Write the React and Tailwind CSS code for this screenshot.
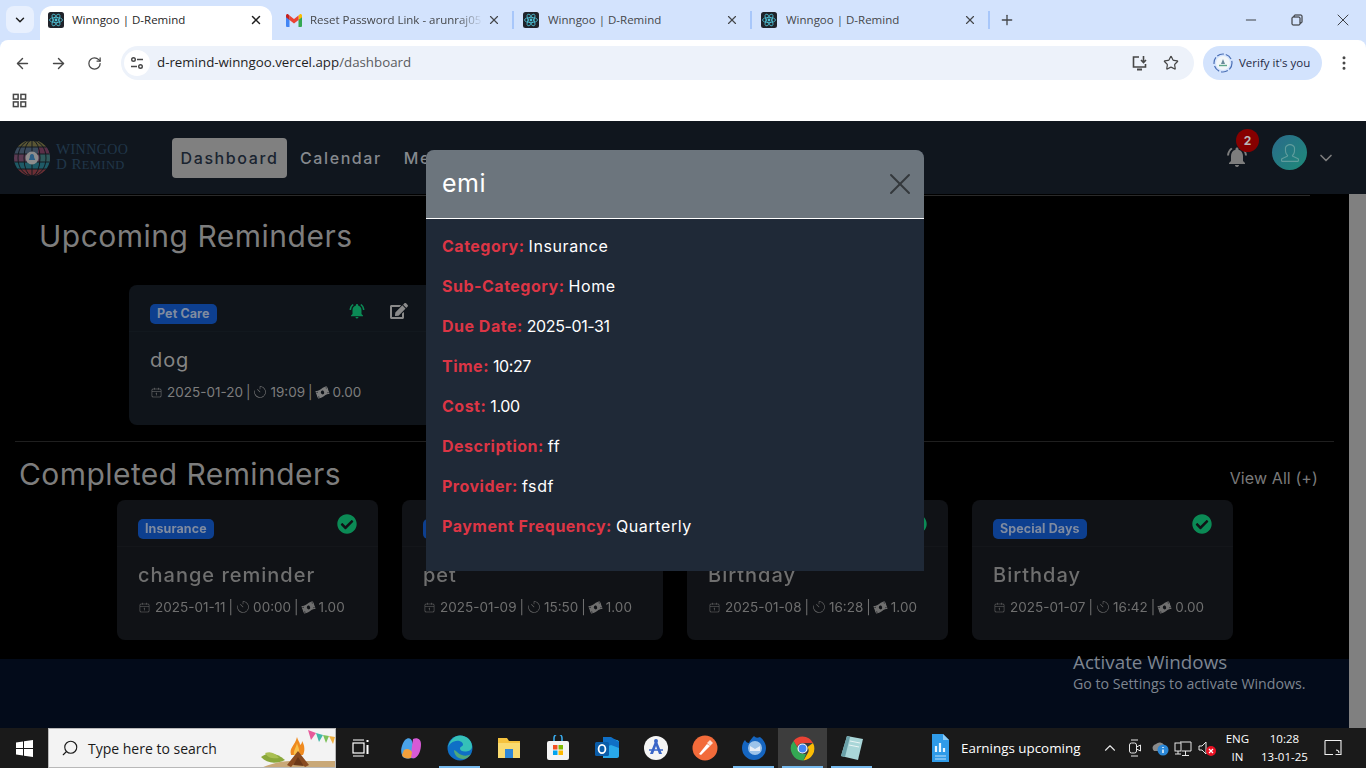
import { ArrowLeft, ArrowRight, RotateCw, Star, X, Plus, Minus, EllipsisVertical, ChevronDown, ChevronUp, Search } from "lucide-react";
import { MdNotificationsActive } from "react-icons/md";
import { FaCheckCircle, FaEdit, FaMoneyBillWave } from "react-icons/fa";
import { CiCalendarDate, CiTimer } from "react-icons/ci";
import { SlUser } from "react-icons/sl";

const ReactFav = () => (
  <svg width="16" height="16" viewBox="0 0 16 16" className="shrink-0">
    <rect width="16" height="16" rx="2.5" fill="#20232a" />
    <g fill="none" stroke="#4fc3d8" strokeWidth="0.8">
      <ellipse cx="8" cy="8" rx="6.5" ry="2.6" />
      <ellipse cx="8" cy="8" rx="6.5" ry="2.6" transform="rotate(60 8 8)" />
      <ellipse cx="8" cy="8" rx="6.5" ry="2.6" transform="rotate(120 8 8)" />
    </g>
    <circle cx="8" cy="8" r="1.4" fill="#4fc3d8" />
  </svg>
);

const GmailFav = () => (
  <svg width="16" height="13" viewBox="0 0 16 13" className="shrink-0">
    <path d="M0 2v10a1 1 0 0 0 1 1h2.5V5.5z" fill="#4285f4" />
    <path d="M16 2v10a1 1 0 0 1-1 1h-2.5V5.5z" fill="#34a853" />
    <path d="M12.5 1.5V6L16 3.2V1.6C16 .4 14.6-.4 13.6.4z" fill="#fbbc04" />
    <path d="M3.5 6V1.5L8 5l4.5-3.5V6L8 9.4z" fill="#ea4335" />
    <path d="M0 1.6v1.6L3.5 6V1.5L2.4.4C1.4-.4 0 .4 0 1.6z" fill="#c5221f" />
  </svg>
);

const Tab = ({ title, gmail }) => (
  <div className={gmail ? "flex items-center w-[242px] h-[34px] pb-[6px] pl-[14px]" : "flex items-center w-[238px] h-[34px] pb-[6px] pl-[9px]"}>
    {gmail ? <GmailFav /> : <ReactFav />}
    <span className={gmail ? "ml-2 flex-1 overflow-hidden whitespace-nowrap text-[11.500px] text-[#45474a] mask-r-from-85% mask-r-to-100%" : "ml-[9px] flex-1 overflow-hidden whitespace-nowrap text-[11.500px] text-[#45474a]"}>{title}</span>
    <X size={14} strokeWidth={2} className="ml-1 text-[#45474a] shrink-0" />
    <div className="w-[2px] h-[18px] ml-[11px] bg-[#a8c7fa]" />
  </div>
);

const BrowserBar = () => (
  <div className="bg-[#d3e3fd] h-[121px] font-['Open_Sans',sans-serif]">
    <div className="flex items-end h-10 pl-[6px]">
      <div className="flex items-center justify-center self-start w-7 h-[27px] mt-[6px] rounded-lg bg-[#e8f0fe]">
        <ChevronDown size={14} strokeWidth={2.5} className="text-[#1f1f1f]" />
      </div>
      <div className="flex items-center w-[232px] h-[34px] ml-[6px] pb-[6px] pl-2 pr-[9px] bg-white rounded-t-xl">
        <ReactFav />
        <span className="ml-2 flex-1 text-[11.500px] text-[#1f1f1f]">Winngoo | D-Remind</span>
        <X size={14} strokeWidth={2.5} className="text-[#1f1f1f]" />
      </div>
      <Tab gmail title="Reset Password Link - arunraj05" />
      <Tab title="Winngoo | D-Remind" />
      <Tab title="Winngoo | D-Remind" />
      <div className="flex items-center h-[34px] pb-[6px] ml-[9px]">
        <Plus size={16} strokeWidth={2} className="text-[#45474a]" />
      </div>
      <div className="flex items-center self-start h-10 ml-auto text-[#1f1f1f]">
        <Minus size={16} strokeWidth={1.25} />
        <svg width="12" height="12" viewBox="0 0 12 12" className="ml-[32px]" fill="none" stroke="#1f1f1f">
          <rect x="1" y="3" width="8" height="8" rx="1" />
          <path d="M3 3V2a1 1 0 0 1 1-1h6a1 1 0 0 1 1 1v6a1 1 0 0 1-1 1H9" />
        </svg>
        <X size={20} strokeWidth={1} className="ml-[30px] mr-[13px]" />
      </div>
    </div>
    <div className="h-[81px] bg-white rounded-t-lg">
      <div className="flex items-center h-[45px] pt-px pl-[14px]">
        <ArrowLeft size={17} strokeWidth={2} className="text-[#474747]" />
        <ArrowRight size={17} strokeWidth={2} className="ml-[19px] text-[#474747]" />
        <RotateCw size={15} strokeWidth={2} className="ml-[20px] text-[#474747]" />
        <div className="flex items-center w-[1073px] h-[34px] ml-[19px] pl-[3px] pr-[15px] bg-[#edf2fa] rounded-full">
          <div className="flex items-center justify-center w-[26px] h-[26px] bg-white rounded-full">
            <svg width="14" height="14" viewBox="0 0 14 14" fill="none" stroke="#474747" strokeWidth="1.4">
              <circle cx="3.5" cy="3.5" r="1.8" />
              <path d="M7 3.5h6M1 10.5h6" />
              <circle cx="10.5" cy="10.5" r="1.8" />
            </svg>
          </div>
          <span className="ml-[7px] flex-1 text-[13.300px] text-[#1f1f1f]">
            d-remind-winngoo.vercel.app<span className="text-[#5a5c60]">/dashboard</span>
          </span>
          <svg width="18" height="18" viewBox="0 0 18 18" fill="none" stroke="#474747" strokeWidth="1.6">
            <path d="M8 3H2.5v10h12V10" />
            <path d="M6 15.5h5" strokeWidth="2" />
            <path d="M12.5 2v6M10 6l2.500 2.500L15 6" />
          </svg>
          <Star size={16} strokeWidth={1.8} className="ml-[14px] text-[#474747]" />
        </div>
        <div className="flex items-center w-[119px] h-[34px] ml-[9px] pl-[10px] bg-[#d3e3fd] rounded-full">
          <svg width="20" height="20" viewBox="0 0 20 20" fill="none">
            <circle cx="10" cy="10" r="9" stroke="#4a6fb5" strokeWidth="1.2" strokeDasharray="7 2" />
            <circle cx="10" cy="10" r="7" fill="#f2f6f8" />
            <path d="M10 6l2 5H8z" fill="#6a8a9a" />
            <path d="M6 12.500h8" stroke="#5fa78a" strokeWidth="1.4" />
          </svg>
          <span className="ml-[6px] text-[11.500px] text-[#1f2a44] whitespace-nowrap">Verify it's you</span>
        </div>
        <EllipsisVertical size={18} strokeWidth={2} className="ml-[13px] text-[#474747]" />
      </div>
      <div className="flex items-center h-[35px] pb-[5px] pl-3">
        <svg width="15" height="15" viewBox="0 0 16 16" fill="none" stroke="#474747" strokeWidth="1.6">
          <rect x="1.500" y="1.500" width="5" height="5" />
          <rect x="9.500" y="1.500" width="5" height="5" />
          <rect x="1.500" y="9.500" width="5" height="5" />
          <rect x="9.500" y="9.500" width="5" height="5" />
        </svg>
      </div>
    </div>
  </div>
);

const Globe = () => (
  <svg width="36" height="36" viewBox="0 0 36 36" className="shrink-0">
    <defs>
      <clipPath id="globeClip"><circle cx="18" cy="18" r="18" /></clipPath>
    </defs>
    <g clipPath="url(#globeClip)">
      <rect width="36" height="36" fill="#141a20" />
      <rect y="1" width="36" height="6" fill="#5a5634" />
      <rect y="7" width="36" height="7" fill="#3a4a5c" />
      <rect x="24" y="7" width="12" height="7" fill="#5a3048" />
      <rect y="14" width="36" height="8" fill="#5b3a52" />
      <rect x="26" y="14" width="10" height="8" fill="#2f5a5c" />
      <rect y="22" width="36" height="7" fill="#1f5a66" />
      <rect y="29" width="36" height="7" fill="#6b2f35" />
      <g fill="none" stroke="#141a20" strokeWidth="1">
        <ellipse cx="18" cy="18" rx="8" ry="18" />
        <ellipse cx="18" cy="18" rx="14" ry="18" />
        <path d="M18 0v36M0 7h36M0 14h36M0 22h36M0 29h36" />
      </g>
    </g>
    <circle cx="18" cy="18" r="6.500" fill="#8d8d8d" />
    <path d="M18 14c1.700 0 2.200 1.700 2.200 3.500l1 2.500h-6.400l1-2.500c0-1.800.5-3.500 2.200-3.500z" fill="#2c5f86" />
  </svg>
);

const NavBar = () => (
  <div className="flex items-center h-[73px] pl-[14px] bg-[#10161e]">
    <Globe />
    <div className="ml-[6px] w-[110px] font-['Liberation_Serif',serif] text-[#20374a] text-[15px] leading-[15px] tracking-[0.4px]">
      <div>W<span className="text-[14px]">INNGOO</span></div>
      <div>D R<span className="text-[12.500px]">EMIND</span></div>
    </div>
    <div className="flex items-center ml-[6px] text-[16px] tracking-[1.6px] font-medium">
      <div className="flex items-center justify-center w-[115px] h-10 bg-[#808080] rounded text-[#1a2430]">Dashboard</div>
      <span className="ml-[13px] text-[#85898e]">Calendar</span>
      <span className="ml-[22px] text-[#85898e]">Members</span>
    </div>
    <div className="relative flex items-center ml-auto pr-[30px]">
      <MdNotificationsActive size={24} className="mt-[-2px] text-[#7d7d7d]" />
      <div className="absolute -top-[6px] left-[11px] flex items-center justify-center w-[23px] h-[23px] rounded-full bg-[#870000] text-[#b9b9b9] text-[12px] font-bold">2</div>
      <div className="flex items-center justify-center w-[35px] h-[35px] ml-[23px] mb-[10px] rounded-full bg-linear-to-br from-[#2a6a8a] to-[#1d8a78]">
        <SlUser size={18} className="text-[#5f9c9c]" />
      </div>
      <ChevronDown size={20} strokeWidth={2} className="ml-[9px] text-[#7d7d7d]" />
    </div>
  </div>
);

const Meta = ({ date, time, cost }) => (
  <div className="flex items-center mt-[9px] text-[13.500px] whitespace-nowrap">
    <CiCalendarDate size={13} className="mr-[4px]" />
    <span>{date}</span>
    <span className="ml-[3px]">|</span>
    <CiTimer size={14} className="ml-[3px] mr-[3px]" />
    <span>{time}</span>
    <span className="ml-[3px]">|</span>
    <FaMoneyBillWave size={13} className="ml-[3px] mr-[4px] -rotate-20" />
    <span>{cost}</span>
  </div>
);

const completed = [
  { tag: "Insurance", title: "change reminder", date: "2025-01-11", time: "00:00", cost: "1.00" },
  { tag: "Pet Care", title: "pet", date: "2025-01-09", time: "15:50", cost: "1.00" },
  { tag: "Special Days", title: "Birthday", date: "2025-01-08", time: "16:28", cost: "1.00" },
  { tag: "Special Days", title: "Birthday", date: "2025-01-07", time: "16:42", cost: "0.00" },
];

const Tag = ({ children }) => (
  <span className="inline-flex items-center h-5 px-[7px] pt-px rounded-[5px] bg-[#0d3f8f] text-[#7f8ba0] text-[12.500px] font-bold tracking-[0.1px]">{children}</span>
);

const CompletedCard = ({ item }) => (
  <div className="w-[261px] h-[140px] rounded-lg bg-[#101216] text-[#6f6f6f] blur-[0.4px]">
    <div className="flex items-start justify-between h-[47px] pt-[19px] pl-[21px] pr-[21px] border-b border-[#14161a]">
      <Tag>{item.tag}</Tag>
      <FaCheckCircle size={20} className="-mt-[5px] text-[#0b8a55]" />
    </div>
    <div className="pl-[21px] pt-[15px]">
      <div className="text-[20px] leading-[26px] font-medium tracking-[1px]">{item.title}</div>
      <Meta date={item.date} time={item.time} cost={item.cost} />
    </div>
  </div>
);

const Main = () => (
  <div className="flex flex-col flex-1 bg-black font-['Inter',sans-serif]">
    <div className="mt-[1px] ml-[40px] w-[1270px] h-px bg-[#2a2a2a]" />
    <h2 className="mt-[20px] ml-[39px] text-[30px] leading-[40px] tracking-[0.5px] text-[#7d7d7d]">Upcoming Reminders</h2>
    <div className="mt-[29px] ml-[129px] w-[320px] h-[140px] rounded-lg bg-[#0f141a] text-[#7d7d7d]">
      <div className="flex items-start h-[47px] pt-[19px] pl-[21px] border-b border-[#12181e]">
        <Tag>Pet Care</Tag>
        <MdNotificationsActive size={18} className="ml-[131px] -mt-[2px] text-[#0b8a55]" />
        <FaEdit size={18} className="ml-[24px] -mt-[2px] text-[#8a8a8a]" />
      </div>
      <div className="pl-[21px] pt-[15px]">
        <div className="text-[20px] leading-[26px] tracking-[0.9px] text-[#858585]">dog</div>
        <Meta date="2025-01-20" time="19:09" cost="0.00" />
      </div>
    </div>
    <div className="mt-[16px] ml-[15px] w-[1319px] h-px bg-[#1f1f1f]" />
    <div className="flex items-start justify-between mt-[12px] pl-[19px] pr-[31px]">
      <h2 className="text-[30px] leading-[40px] tracking-[0.43px] text-[#7d7d7d]">Completed Reminders</h2>
      <span className="mt-[14px] text-[16px] leading-[20px] tracking-[0.1px] text-[#7a7a7a]">View All (+)</span>
    </div>
    <div className="flex gap-6 mt-[6px] ml-[117px]">
      {completed.map((item) => (
        <CompletedCard key={item.date} item={item} />
      ))}
    </div>
    <div className="flex-1 mt-[19px] bg-[#030b1a]" />
  </div>
);

const details = [
  ["Category:", "Insurance"],
  ["Sub-Category:", "Home"],
  ["Due Date:", "2025-01-31"],
  ["Time:", "10:27"],
  ["Cost:", "1.00"],
  ["Description:", "ff"],
  ["Provider:", "fsdf"],
  ["Payment Frequency:", "Quarterly"],
];

const Modal = () => (
  <div className="absolute left-[426px] top-[29px] z-10 w-[498px] rounded-t-lg bg-[#1f2937] font-['Inter',sans-serif]">
    <div className="flex items-center justify-between h-[69px] pl-4 pr-[6px] bg-[#6c757d] border-b border-white rounded-t-lg">
      <span className="text-[25px] text-white tracking-[0.5px]">emi</span>
      <X size={36} strokeWidth={1.3} className="text-[#34383c]" />
    </div>
    <div className="pt-[7px] pb-[25px] pl-4">
      {details.map(([label, value]) => (
        <div key={label} className="flex items-center h-10 text-[16px]">
          <span className="font-bold tracking-[0.5px] text-[#dc3545]">{label}</span>
          <span className={/^\d/.test(value) ? "ml-[4px] tracking-[-0.4px] text-white" : "ml-[4px] tracking-[0.6px] text-white"}>{value}</span>
        </div>
      ))}
    </div>
  </div>
);

const Slot = ({ children, open, active }) => (
  <div className={active ? "relative flex items-center justify-center w-[49px] h-10 bg-[#3d3d3d]" : "relative flex items-center justify-center w-[49px] h-10"}>
    {children}
    {open && <div className="absolute bottom-0 left-[4px] right-[4px] h-[2px] bg-[#76b9ed]" />}
  </div>
);

const Taskbar = () => (
  <div className="flex items-center h-10 bg-[#1a1a1a] font-['Open_Sans',sans-serif] text-white">
    <div className="flex items-center justify-center w-12 h-10">
      <svg width="17" height="17" viewBox="0 0 17 17" fill="#fff">
        <path d="M0 2.400l7-1V8H0zM8 1.200L17 0v8H8zM0 9h7v6.600l-7-1zM8 9h9v8l-9-1.200z" />
      </svg>
    </div>
    <div className="relative flex items-center w-[288px] h-10 pl-[12px] bg-[#f3f3f3] border border-[#b8b8b8] overflow-hidden">
      <Search size={18} strokeWidth={1.5} className="-scale-x-100 text-[#1a1a1a]" />
      <span className="ml-[9px] text-[14px] text-[#1a1a1a]">Type here to search</span>
      <svg width="110" height="40" viewBox="0 0 110 40" className="absolute right-0 top-0">
        <path d="M34 40c8-4 20-8 32-8h44v8z" fill="#c9a877" />
        <path d="M36 28c8-6 16-4 24 3-8 4-18 4-24-3z" fill="#8aa83a" />
        <path d="M40 24c6-2 10 0 14 5-6 1-11 0-14-5z" fill="#a9bf52" />
        <path d="M66 26c-2-8 4-9 6-18 1 4 3 5 3 8 2-1 2-3 2-4 3 5 3 10 1 14z" fill="#ef8a1f" />
        <path d="M72 14c1 4 3 6 2 12h-5c-1-4 2-7 3-12z" fill="#f8c04a" />
        <path d="M62 36l11-14 11 14-4 2-7-8-7 8z" fill="#8a4b20" />
        <path d="M68 36l5-8 6 9z" fill="#6b3818" />
        <path d="M83 1l8 3-5 7z" fill="#e65a9a" />
        <path d="M91 4l7 2-4 7z" fill="#42b8a8" />
        <path d="M98 6l6 1-3 7z" fill="#7cc05a" />
        <path d="M104 7l6 1-2 7z" fill="#f0b040" />
      </svg>
    </div>
    <div className="flex items-center justify-center w-[50px] h-10">
      <svg width="18" height="18" viewBox="0 0 18 18" fill="none" stroke="#fff" strokeWidth="1.2">
        <path d="M1 1h11M1 17h11" />
        <rect x="1" y="4" width="11" height="10" />
        <path d="M15.500 1v2M15.500 6v9" strokeWidth="2" />
      </svg>
    </div>
    <Slot>
      <svg width="24" height="24" viewBox="0 0 24 24">
        <path d="M6 4c3-3 6-2 7 1l4 13c1 3-2 5-5 4-4 1-8 1-9-3-2-5 0-11 3-15z" fill="#4aa3e8" />
        <path d="M14 3c4-2 8 0 8 5 0 6-2 12-6 14-3 1-5-1-4-4z" fill="#d65ad6" />
        <path d="M5 14c3-2 6-1 8 2l-1 6c-4 1-8 0-9-3z" fill="#f2a03c" />
      </svg>
    </Slot>
    <Slot open>
      <svg width="26" height="26" viewBox="0 0 26 26">
        <circle cx="13" cy="13" r="12.500" fill="#0f6fc6" />
        <path d="M1 13C2 5 8 .5 13 .5c7 0 12 5 12 11 0 4-4 5-7 5-3 0-5-1-5-3 0-2 3-2 3-4 0-3-5-5-9-3C3 8 2 10 1 13z" fill="#35c1b8" />
        <path d="M7 15c0 5 4 9 9 9 3 0 6-2 8-5-3 2-7 2-9 1-4-1-5-4-8-5z" fill="#7ad14a" opacity="0.6" />
      </svg>
    </Slot>
    <Slot>
      <svg width="24" height="22" viewBox="0 0 24 22">
        <path d="M1 1h9l2 3h11v17H1z" fill="#f5c23e" />
        <path d="M1 6h22v15H1z" fill="#fadb70" />
        <rect x="8" y="12" width="8" height="9" fill="#2f88d8" />
      </svg>
    </Slot>
    <Slot>
      <svg width="24" height="26" viewBox="0 0 24 26">
        <path d="M8 6V3a4 4 0 0 1 8 0v3" fill="none" stroke="#38a8e8" strokeWidth="1.6" />
        <rect x="1" y="6" width="22" height="19" rx="2" fill="#f4f4f4" />
        <rect x="7" y="10" width="4.500" height="4.500" fill="#f25022" />
        <rect x="12.500" y="10" width="4.500" height="4.500" fill="#7fba00" />
        <rect x="7" y="15.500" width="4.500" height="4.500" fill="#00a4ef" />
        <rect x="12.500" y="15.500" width="4.500" height="4.500" fill="#ffb900" />
      </svg>
    </Slot>
    <Slot>
      <svg width="26" height="24" viewBox="0 0 26 24">
        <path d="M9 1l14 3c1 0 2 1 2 2v14c0 1-1 2-2 2H9z" fill="#28a8ea" />
        <path d="M9 1h8l8 5v6l-8-3-8 3z" fill="#0f6fc6" />
        <rect x="1" y="6" width="14" height="14" rx="1.500" fill="#0a5ca8" />
        <ellipse cx="8" cy="13" rx="3.400" ry="4.200" fill="none" stroke="#fff" strokeWidth="1.800" />
      </svg>
    </Slot>
    <Slot>
      <svg width="24" height="26" viewBox="0 0 24 26">
        <circle cx="12" cy="13" r="12" fill="#f5f5f5" />
        <path d="M12 4l6 15h-3l-3-8-3 8H6z" fill="#3a66c8" />
        <path d="M5 15h14" stroke="#3a66c8" strokeWidth="1.500" />
        <circle cx="12" cy="6" r="2" fill="#3a66c8" />
      </svg>
    </Slot>
    <Slot>
      <svg width="26" height="26" viewBox="0 0 26 26">
        <circle cx="13" cy="13" r="12.500" fill="#f26b3a" />
        <path d="M7 19l8-10 3 2-9 9z" fill="#fff" />
        <path d="M15 8l3-3 3 3-3 3z" fill="#fde0d2" />
      </svg>
    </Slot>
    <Slot open>
      <svg width="26" height="26" viewBox="0 0 26 26">
        <path d="M13 1c2 2 3 2 6 1 4 3 6 7 6 11a12 12 0 0 1-24 0c0-3 1-6 3-8 1 2 2 3 4 3 1-3 3-5 5-7z" fill="#1565c0" />
        <circle cx="14" cy="13" r="7" fill="#9cc3ea" />
        <path d="M9 11l5 3 5-3v5H9z" fill="#e8eef6" />
      </svg>
    </Slot>
    <Slot open active>
      <svg width="25" height="25" viewBox="0 0 25 25">
        <path d="M12.500.5A12 12 0 0 1 23 7H12.500a5.500 5.500 0 0 0-5.300 4L3.500 5A12 12 0 0 1 12.500.5z" fill="#ea4335" />
        <path d="M23 7a12 12 0 0 1-9.500 17.500l4-7a5.500 5.500 0 0 0 0-6.500z" fill="#fbbc04" />
        <path d="M13.500 24.500A12 12 0 0 1 3.500 5l4 6.500a5.500 5.500 0 0 0 5.500 6.500h3z" fill="#34a853" />
        <circle cx="12.500" cy="12.500" r="4.500" fill="#4285f4" stroke="#fff" strokeWidth="1.200" />
      </svg>
    </Slot>
    <Slot open>
      <svg width="24" height="26" viewBox="0 0 24 26">
        <path d="M7 1l16 3-5 21L1 21z" fill="#a9d6d8" />
        <path d="M1 21l6-20 3 1-5 20z" fill="#6aa0a8" />
        <path d="M10 6l10 2M9 10l10 2" stroke="#e8f4f4" strokeWidth="1" />
      </svg>
    </Slot>
    <div className="flex items-center ml-[55px]">
      <svg width="19" height="30" viewBox="0 0 19 30">
        <path d="M1 1h11l6 6v22H1z" fill="#2f9be8" />
        <path d="M12 1l6 6h-6z" fill="#8fcbf5" />
        <path d="M5 19v-6M9 19v-9M13 19v-4" stroke="#e8f5fd" strokeWidth="2.200" />
        <path d="M4 23h11M4 26h11" stroke="#bfe2f9" strokeWidth="1.200" />
      </svg>
      <span className="ml-[11px] text-[13.400px] whitespace-nowrap">Earnings upcoming</span>
    </div>
    <ChevronUp size={18} strokeWidth={1.5} className="ml-[21px] text-[#e6e6e6]" />
    <svg width="14" height="18" viewBox="0 0 14 18" fill="none" stroke="#e6e6e6" className="ml-[9px]">
      <path d="M3 1h7M3 17h7" />
      <rect x="1.500" y="4" width="7" height="10" rx="2" />
      <path d="M8.500 8l4-2v6l-4-2" />
    </svg>
    <svg width="18" height="16" viewBox="0 0 18 16" className="ml-[9px]">
      <path d="M3 11a4 4 0 0 1 2-7 5 5 0 0 1 8 1v6z" fill="#8a8a8a" />
      <circle cx="12" cy="10" r="5.500" fill="#2b88d8" />
      <path d="M12 7v1M12 9.500V13" stroke="#fff" strokeWidth="1.400" />
    </svg>
    <svg width="18" height="17" viewBox="0 0 18 17" fill="none" stroke="#e6e6e6" className="ml-[5px]">
      <path d="M6 2h11v9H8M4 14v-3M1 14h6M11.500 11v4M8 15.500h7" />
      <rect x="1" y="3" width="6" height="8" />
    </svg>
    <svg width="18" height="16" viewBox="0 0 18 16" className="ml-[6px]">
      <path d="M1 6h3l4-4v12l-4-4H1z" fill="none" stroke="#e6e6e6" />
      <circle cx="13" cy="11" r="5" fill="#e81123" />
      <path d="M11 9l4 4M15 9l-4 4" stroke="#fff" strokeWidth="1.200" />
    </svg>
    <div className="ml-[4px] w-[34px] text-center text-[11.500px] leading-[18px]">
      <div>ENG</div>
      <div>IN</div>
    </div>
    <div className="w-[60px] text-center text-[11.500px] leading-[18px]">
      <div>10:28</div>
      <div>13-01-25</div>
    </div>
    <svg width="18" height="18" viewBox="0 0 18 18" fill="none" stroke="#f0f0f0" strokeWidth="1.100" className="ml-[10px]">
      <path d="M1 1.500h16v14h-5.500M1 1.500v14h8" />
      <path d="M12 11c2 0 3 1 3 3" />
    </svg>
  </div>
);

const App = () => {
  return (
    <div className="flex flex-col w-[1366px] h-[768px] overflow-hidden">
      <BrowserBar />
      <div className="relative flex flex-col h-[607px] font-['Inter',sans-serif]">
        <NavBar />
        <div className="flex flex-1">
          <Main />
          <div className="w-[17px] bg-[#808080]" />
        </div>
        <Modal />
        <div className="absolute left-[1073px] top-[529px] z-20 font-['Open_Sans',sans-serif] text-[#7e8590]">
          <div className="text-[18.800px] leading-[24px]">Activate Windows</div>
          <div className="text-[14.200px] leading-[20px] whitespace-nowrap">Go to Settings to activate Windows.</div>
        </div>
      </div>
      <Taskbar />
    </div>
  );
};

export default App;
